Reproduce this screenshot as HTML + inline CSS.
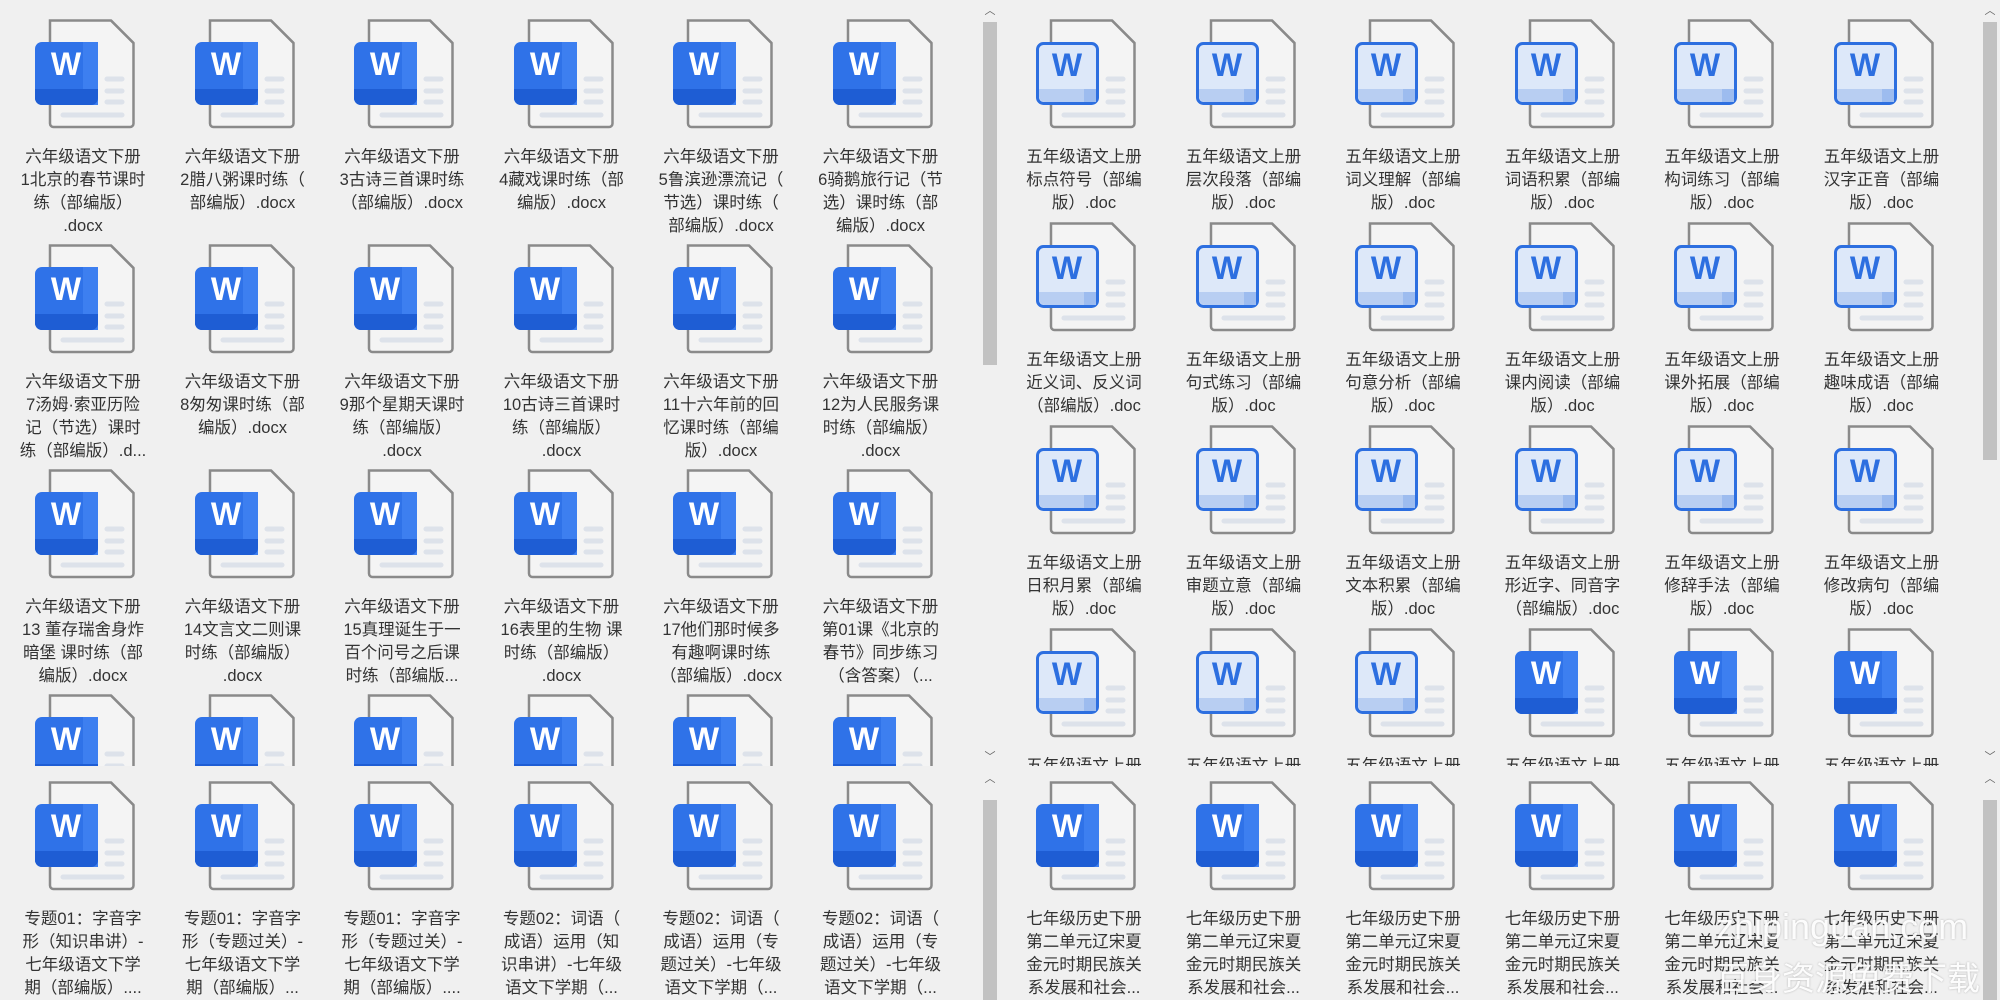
<!DOCTYPE html>
<html><head><meta charset="utf-8">
<style>
*{margin:0;padding:0;box-sizing:border-box}
html,body{width:2000px;height:1000px;overflow:hidden;background:#f0f0f0;font-family:"Liberation Sans","Noto Sans CJK SC",sans-serif}
.panel{position:absolute;overflow:hidden;background:#f0f0f0}
.grid{position:absolute;display:grid;grid-template-columns:repeat(6,159.5px)}
.item{position:relative;width:159.5px}
.item svg{position:absolute;left:32px;top:0;width:100px;height:110px}
.item .t{position:absolute;top:127px;left:5px;width:150px;text-align:center;font-size:16.5px;line-height:23px;color:#333;white-space:nowrap}
.sb{position:absolute;width:20px;background:#f0f0f0}
.thumb{position:absolute;left:3px;width:14px;background:#c2c2c2}
.arr{position:absolute;left:0;width:20px;text-align:center;font-size:11px;color:#666}
.wm{position:absolute;color:rgba(255,255,255,0.95);text-shadow:0 0 2px rgba(0,0,0,0.25);white-space:nowrap}
</style></head><body>
<svg width="0" height="0" style="position:absolute">
<defs>
<symbol id="pg" viewBox="0 0 100 110">
<path d="M15 1.5H76L98.5 24V104.5a3.5 3.5 0 0 1-3.5 3.5H18.5a3.5 3.5 0 0 1-3.5-3.5Z" fill="#f4f4f4" stroke="#8a8a8a" stroke-width="2.5"/>
<path d="M76 1.5L98.5 24" stroke="#8a8a8a" stroke-width="2.5"/>
<g stroke="#dde2ea" stroke-width="5" stroke-linecap="round">
<line x1="72" y1="60" x2="87" y2="60"/><line x1="72" y1="72" x2="87" y2="72"/><line x1="72" y1="83" x2="87" y2="83"/><line x1="28" y1="96" x2="87" y2="96"/></g>
</symbol>
<symbol id="solid" viewBox="0 0 100 110">
<use href="#pg"/>
<rect x="0" y="23" width="63" height="63" rx="7" fill="#2f72e8"/>
<rect x="48" y="23" width="15" height="63" rx="0" fill="#3d7ff0"/>
<path d="M0 70H63V79a7 7 0 0 1-7 7H7a7 7 0 0 1-7-7Z" fill="#1e5dd4"/>
<text x="31" y="56" text-anchor="middle" font-family="Liberation Sans,sans-serif" font-weight="bold" font-size="32" fill="#fff">W</text>
</symbol>
<symbol id="outl" viewBox="0 0 100 110">
<use href="#pg"/>
<rect x="1.5" y="24.5" width="60" height="60" rx="6" fill="#dde8f9" stroke="#2d6fe0" stroke-width="3"/>
<path d="M3 70H60V77a6 6 0 0 1-6 6H9a6 6 0 0 1-6-6Z" fill="#b8cef2"/>
<rect x="48" y="70" width="12" height="13" fill="#9dbcef"/>
<text x="31" y="57" text-anchor="middle" font-family="Liberation Sans,sans-serif" font-weight="bold" font-size="32" fill="#2d6fe0">W</text>
</symbol>
</defs></svg>

<!-- LEFT TOP -->
<div class="panel" style="left:0;top:0;width:980px;height:766px">
<div class="grid" style="left:3px;top:19px;grid-auto-rows:225px">
<div class="item"><svg><use href="#solid"/></svg><div class="t">六年级语文下册<br>1北京的春节课时<br>练（部编版）<br>.docx</div></div>
<div class="item"><svg><use href="#solid"/></svg><div class="t">六年级语文下册<br>2腊八粥课时练（<br>部编版）.docx</div></div>
<div class="item"><svg><use href="#solid"/></svg><div class="t">六年级语文下册<br>3古诗三首课时练<br>（部编版）.docx</div></div>
<div class="item"><svg><use href="#solid"/></svg><div class="t">六年级语文下册<br>4藏戏课时练（部<br>编版）.docx</div></div>
<div class="item"><svg><use href="#solid"/></svg><div class="t">六年级语文下册<br>5鲁滨逊漂流记（<br>节选）课时练（<br>部编版）.docx</div></div>
<div class="item"><svg><use href="#solid"/></svg><div class="t">六年级语文下册<br>6骑鹅旅行记（节<br>选）课时练（部<br>编版）.docx</div></div>
<div class="item"><svg><use href="#solid"/></svg><div class="t">六年级语文下册<br>7汤姆·索亚历险<br>记（节选）课时<br>练（部编版）.d...</div></div>
<div class="item"><svg><use href="#solid"/></svg><div class="t">六年级语文下册<br>8匆匆课时练（部<br>编版）.docx</div></div>
<div class="item"><svg><use href="#solid"/></svg><div class="t">六年级语文下册<br>9那个星期天课时<br>练（部编版）<br>.docx</div></div>
<div class="item"><svg><use href="#solid"/></svg><div class="t">六年级语文下册<br>10古诗三首课时<br>练（部编版）<br>.docx</div></div>
<div class="item"><svg><use href="#solid"/></svg><div class="t">六年级语文下册<br>11十六年前的回<br>忆课时练（部编<br>版）.docx</div></div>
<div class="item"><svg><use href="#solid"/></svg><div class="t">六年级语文下册<br>12为人民服务课<br>时练（部编版）<br>.docx</div></div>
<div class="item"><svg><use href="#solid"/></svg><div class="t">六年级语文下册<br>13 董存瑞舍身炸<br>暗堡 课时练（部<br>编版）.docx</div></div>
<div class="item"><svg><use href="#solid"/></svg><div class="t">六年级语文下册<br>14文言文二则课<br>时练（部编版）<br>.docx</div></div>
<div class="item"><svg><use href="#solid"/></svg><div class="t">六年级语文下册<br>15真理诞生于一<br>百个问号之后课<br>时练（部编版...</div></div>
<div class="item"><svg><use href="#solid"/></svg><div class="t">六年级语文下册<br>16表里的生物 课<br>时练（部编版）<br>.docx</div></div>
<div class="item"><svg><use href="#solid"/></svg><div class="t">六年级语文下册<br>17他们那时候多<br>有趣啊课时练<br>（部编版）.docx</div></div>
<div class="item"><svg><use href="#solid"/></svg><div class="t">六年级语文下册<br>第01课《北京的<br>春节》同步练习<br>（含答案）（...</div></div>
<div class="item"><svg><use href="#solid"/></svg></div>
<div class="item"><svg><use href="#solid"/></svg></div>
<div class="item"><svg><use href="#solid"/></svg></div>
<div class="item"><svg><use href="#solid"/></svg></div>
<div class="item"><svg><use href="#solid"/></svg></div>
<div class="item"><svg><use href="#solid"/></svg></div>
</div>
</div>
<div class="sb" style="left:980px;top:0;height:766px"><div class="arr" style="top:2px">︿</div><div class="thumb" style="top:22px;height:343px"></div><div class="arr" style="top:748px">﹀</div></div>

<!-- LEFT BOTTOM -->
<div class="panel" style="left:0;top:770px;width:980px;height:230px">
<div class="grid" style="left:3px;top:11px;grid-auto-rows:225px">
<div class="item"><svg><use href="#solid"/></svg><div class="t">专题01：字音字<br>形（知识串讲）-<br>七年级语文下学<br>期（部编版）....</div></div>
<div class="item"><svg><use href="#solid"/></svg><div class="t">专题01：字音字<br>形（专题过关）-<br>七年级语文下学<br>期（部编版）...</div></div>
<div class="item"><svg><use href="#solid"/></svg><div class="t">专题01：字音字<br>形（专题过关）-<br>七年级语文下学<br>期（部编版）....</div></div>
<div class="item"><svg><use href="#solid"/></svg><div class="t">专题02：词语（<br>成语）运用（知<br>识串讲）-七年级<br>语文下学期（...</div></div>
<div class="item"><svg><use href="#solid"/></svg><div class="t">专题02：词语（<br>成语）运用（专<br>题过关）-七年级<br>语文下学期（...</div></div>
<div class="item"><svg><use href="#solid"/></svg><div class="t">专题02：词语（<br>成语）运用（专<br>题过关）-七年级<br>语文下学期（...</div></div>
</div>
</div>
<div class="sb" style="left:980px;top:770px;height:230px"><div class="arr" style="top:0">︿</div><div class="thumb" style="top:30px;height:200px"></div></div>

<!-- RIGHT TOP -->
<div class="panel" style="left:1000px;top:0;width:980px;height:766px">
<div class="grid" style="left:4px;top:19px;grid-auto-rows:203px">
<div class="item"><svg><use href="#outl"/></svg><div class="t">五年级语文上册<br>标点符号（部编<br>版）.doc</div></div>
<div class="item"><svg><use href="#outl"/></svg><div class="t">五年级语文上册<br>层次段落（部编<br>版）.doc</div></div>
<div class="item"><svg><use href="#outl"/></svg><div class="t">五年级语文上册<br>词义理解（部编<br>版）.doc</div></div>
<div class="item"><svg><use href="#outl"/></svg><div class="t">五年级语文上册<br>词语积累（部编<br>版）.doc</div></div>
<div class="item"><svg><use href="#outl"/></svg><div class="t">五年级语文上册<br>构词练习（部编<br>版）.doc</div></div>
<div class="item"><svg><use href="#outl"/></svg><div class="t">五年级语文上册<br>汉字正音（部编<br>版）.doc</div></div>
<div class="item"><svg><use href="#outl"/></svg><div class="t">五年级语文上册<br>近义词、反义词<br>（部编版）.doc</div></div>
<div class="item"><svg><use href="#outl"/></svg><div class="t">五年级语文上册<br>句式练习（部编<br>版）.doc</div></div>
<div class="item"><svg><use href="#outl"/></svg><div class="t">五年级语文上册<br>句意分析（部编<br>版）.doc</div></div>
<div class="item"><svg><use href="#outl"/></svg><div class="t">五年级语文上册<br>课内阅读（部编<br>版）.doc</div></div>
<div class="item"><svg><use href="#outl"/></svg><div class="t">五年级语文上册<br>课外拓展（部编<br>版）.doc</div></div>
<div class="item"><svg><use href="#outl"/></svg><div class="t">五年级语文上册<br>趣味成语（部编<br>版）.doc</div></div>
<div class="item"><svg><use href="#outl"/></svg><div class="t">五年级语文上册<br>日积月累（部编<br>版）.doc</div></div>
<div class="item"><svg><use href="#outl"/></svg><div class="t">五年级语文上册<br>审题立意（部编<br>版）.doc</div></div>
<div class="item"><svg><use href="#outl"/></svg><div class="t">五年级语文上册<br>文本积累（部编<br>版）.doc</div></div>
<div class="item"><svg><use href="#outl"/></svg><div class="t">五年级语文上册<br>形近字、同音字<br>（部编版）.doc</div></div>
<div class="item"><svg><use href="#outl"/></svg><div class="t">五年级语文上册<br>修辞手法（部编<br>版）.doc</div></div>
<div class="item"><svg><use href="#outl"/></svg><div class="t">五年级语文上册<br>修改病句（部编<br>版）.doc</div></div>
<div class="item"><svg><use href="#outl"/></svg><div class="t">五年级语文上册</div></div>
<div class="item"><svg><use href="#outl"/></svg><div class="t">五年级语文上册</div></div>
<div class="item"><svg><use href="#outl"/></svg><div class="t">五年级语文上册</div></div>
<div class="item"><svg><use href="#solid"/></svg><div class="t">五年级语文上册</div></div>
<div class="item"><svg><use href="#solid"/></svg><div class="t">五年级语文上册</div></div>
<div class="item"><svg><use href="#solid"/></svg><div class="t">五年级语文上册</div></div>
</div>
</div>
<div class="sb" style="left:1980px;top:0;height:766px"><div class="arr" style="top:2px">︿</div><div class="thumb" style="top:22px;height:438px"></div><div class="arr" style="top:748px">﹀</div></div>

<!-- RIGHT BOTTOM -->
<div class="panel" style="left:1000px;top:770px;width:980px;height:230px">
<div class="grid" style="left:4px;top:11px;grid-auto-rows:225px">
<div class="item"><svg><use href="#solid"/></svg><div class="t">七年级历史下册<br>第二单元辽宋夏<br>金元时期民族关<br>系发展和社会...</div></div>
<div class="item"><svg><use href="#solid"/></svg><div class="t">七年级历史下册<br>第二单元辽宋夏<br>金元时期民族关<br>系发展和社会...</div></div>
<div class="item"><svg><use href="#solid"/></svg><div class="t">七年级历史下册<br>第二单元辽宋夏<br>金元时期民族关<br>系发展和社会...</div></div>
<div class="item"><svg><use href="#solid"/></svg><div class="t">七年级历史下册<br>第二单元辽宋夏<br>金元时期民族关<br>系发展和社会...</div></div>
<div class="item"><svg><use href="#solid"/></svg><div class="t">七年级历史下册<br>第二单元辽宋夏<br>金元时期民族关<br>系发展和社会...</div></div>
<div class="item"><svg><use href="#solid"/></svg><div class="t">七年级历史下册<br>第二单元辽宋夏<br>金元时期民族关<br>系发展和社会...</div></div>
</div>
</div>
<div class="sb" style="left:1980px;top:770px;height:230px"><div class="arr" style="top:0">︿</div><div class="thumb" style="top:30px;height:200px"></div></div>

<div class="wm" style="left:1716px;top:906px;font-size:36px;font-weight:300">zhipinguan.com</div>
<div class="wm" style="left:1716px;top:952px;font-size:33px;font-family:'Liberation Sans','Noto Sans CJK SC',sans-serif">百身资源免费下载</div>
</body></html>
